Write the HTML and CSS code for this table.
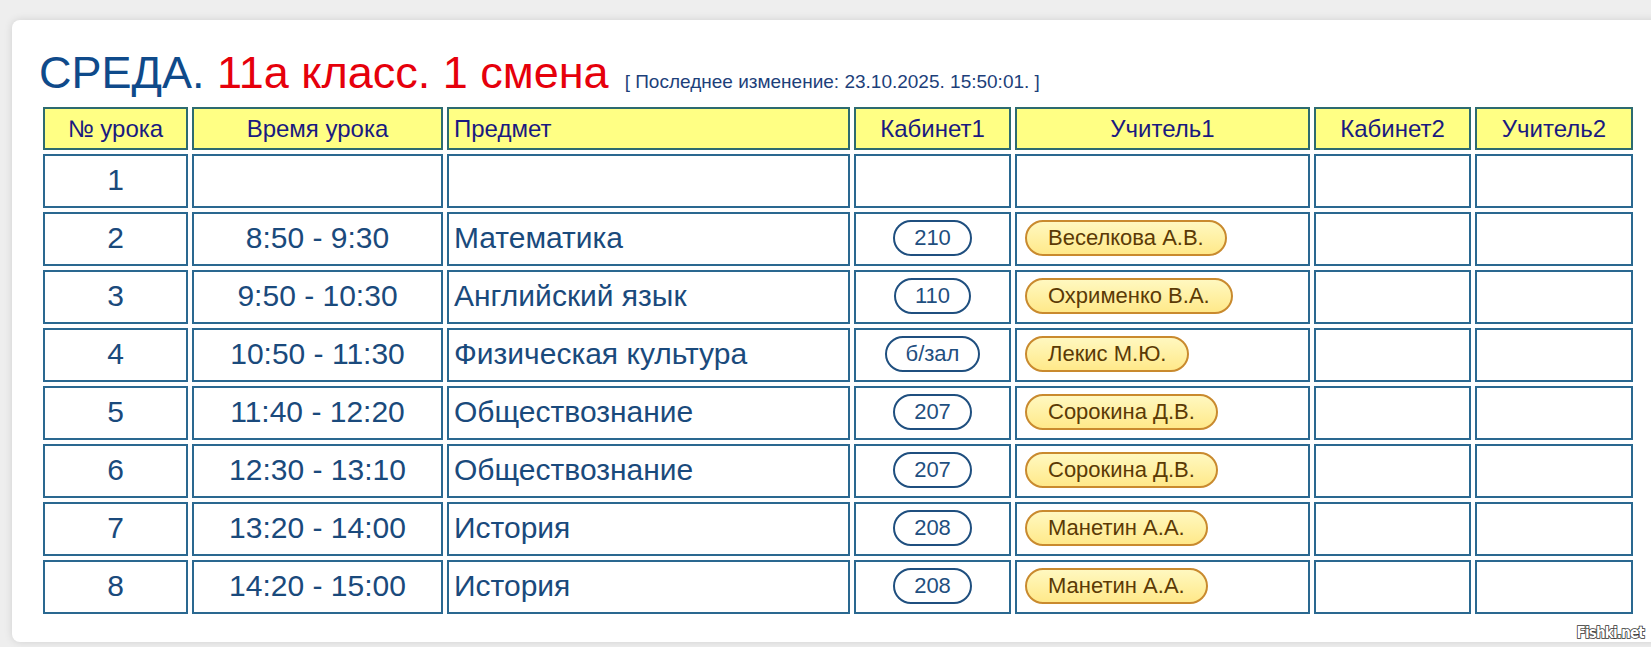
FILE: index.html
```html
<!DOCTYPE html>
<html lang="ru">
<head>
<meta charset="utf-8">
<title>Расписание</title>
<link rel="stylesheet" href="styles.css">
</head>
<body>
<div class="card">
  <div class="title">
    <h1><span class="day">СРЕДА.</span> <span class="cls">11а класс. 1 смена</span></h1>
    <span class="updated">[ Последнее изменение: 23.10.2025. 15:50:01. ]</span>
  </div>
  <table class="sched">
    <colgroup>
      <col class="c1"><col class="c2"><col class="c3"><col class="c4"><col class="c5"><col class="c6"><col class="c7">
    </colgroup>
    <thead>
      <tr>
        <th>№ урока</th><th>Время урока</th><th class="left">Предмет</th><th>Кабинет1</th><th>Учитель1</th><th>Кабинет2</th><th>Учитель2</th>
      </tr>
    </thead>
    <tbody>
      <tr><td>1</td><td></td><td class="left"></td><td></td><td class="left"></td><td></td><td></td></tr>
      <tr><td>2</td><td>8:50 - 9:30</td><td class="left">Математика</td><td><span class="room">210</span></td><td class="left"><span class="teacher">Веселкова А.В.</span></td><td></td><td></td></tr>
      <tr><td>3</td><td>9:50 - 10:30</td><td class="left">Английский язык</td><td><span class="room">110</span></td><td class="left"><span class="teacher">Охрименко В.А.</span></td><td></td><td></td></tr>
      <tr><td>4</td><td>10:50 - 11:30</td><td class="left">Физическая культура</td><td><span class="room">б/зал</span></td><td class="left"><span class="teacher">Лекис М.Ю.</span></td><td></td><td></td></tr>
      <tr><td>5</td><td>11:40 - 12:20</td><td class="left">Обществознание</td><td><span class="room">207</span></td><td class="left"><span class="teacher">Сорокина Д.В.</span></td><td></td><td></td></tr>
      <tr><td>6</td><td>12:30 - 13:10</td><td class="left">Обществознание</td><td><span class="room">207</span></td><td class="left"><span class="teacher">Сорокина Д.В.</span></td><td></td><td></td></tr>
      <tr><td>7</td><td>13:20 - 14:00</td><td class="left">История</td><td><span class="room">208</span></td><td class="left"><span class="teacher">Манетин А.А.</span></td><td></td><td></td></tr>
      <tr><td>8</td><td>14:20 - 15:00</td><td class="left">История</td><td><span class="room">208</span></td><td class="left"><span class="teacher">Манетин А.А.</span></td><td></td><td></td></tr>
    </tbody>
  </table>
</div>
<div class="watermark">Fishki.net</div>
</body>
</html>
```
FILE: styles.css
```css
html, body {
  margin: 0;
  padding: 0;
}
body {
  background: #eeeeee;
  font-family: "Liberation Sans", Arial, sans-serif;
  overflow: hidden;
  width: 1651px;
  height: 647px;
  position: relative;
}
.card {
  margin: 20px 0 0 12px;
  width: 1680px;
  height: 622px;
  box-sizing: border-box;
  background: #ffffff;
  border-radius: 8px;
  box-shadow: 0 0 8px rgba(0, 0, 0, 0.12);
  padding: 27px 0 0 27px;
}
.title {
  display: flex;
  align-items: baseline;
  height: 52px;
}
.title h1 {
  margin: 0;
  font-weight: normal;
  font-size: 45px;
  line-height: 52px;
  white-space: nowrap;
}
.day { color: #0f4a8a; }
.cls { color: #e6000b; }
.updated {
  margin-left: 16px;
  font-size: 19px;
  color: #1d3f7a;
  white-space: nowrap;
}
.sched {
  margin-top: 4px;
  border-collapse: separate;
  border-spacing: 4px;
  table-layout: fixed;
  width: 1598px;
}
.c1 { width: 145px; }
.c2 { width: 251px; }
.c3 { width: 403px; }
.c4 { width: 157px; }
.c5 { width: 295px; }
.c6 { width: 157px; }
.c7 { width: 158px; }
.sched th {
  background: #ffff84;
  border: 2px solid #2d6b70;
  height: 39px;
  padding: 0;
  font-weight: normal;
  font-size: 24px;
  color: #1a1a80;
  text-align: center;
  vertical-align: middle;
}
.sched td {
  border: 2px solid #2a6890;
  height: 47px;
  padding: 0 0 3px 0;
  font-size: 30px;
  color: #1a4a7c;
  text-align: center;
  vertical-align: middle;
  white-space: nowrap;
}
.sched th.left,
.sched td.left {
  text-align: left;
  padding-left: 5px;
}
.sched td.left .teacher { margin-left: 3px; }
.room {
  display: inline-block;
  border: 2px solid #1f4f7f;
  border-radius: 999px;
  padding: 0 19px;
  font-size: 22px;
  line-height: 32px;
  color: #1f4f7f;
  background: #ffffff;
  vertical-align: middle;
}
.teacher {
  display: inline-block;
  border: 2px solid #c98a2e;
  border-radius: 999px;
  padding: 0 21px;
  font-size: 22px;
  line-height: 32px;
  color: #5b3a05;
  background: linear-gradient(#fff8c0, #ffe98a);
  vertical-align: middle;
}
.watermark {
  position: absolute;
  right: 7px;
  bottom: 5px;
  font-family: "DejaVu Sans Condensed", "DejaVu Sans", sans-serif;
  font-stretch: condensed;
  font-weight: bold;
  font-size: 15px;
  letter-spacing: -0.8px;
  color: #ffffff;
  -webkit-text-stroke: 1.5px #333333;
  paint-order: stroke fill;
}
```
